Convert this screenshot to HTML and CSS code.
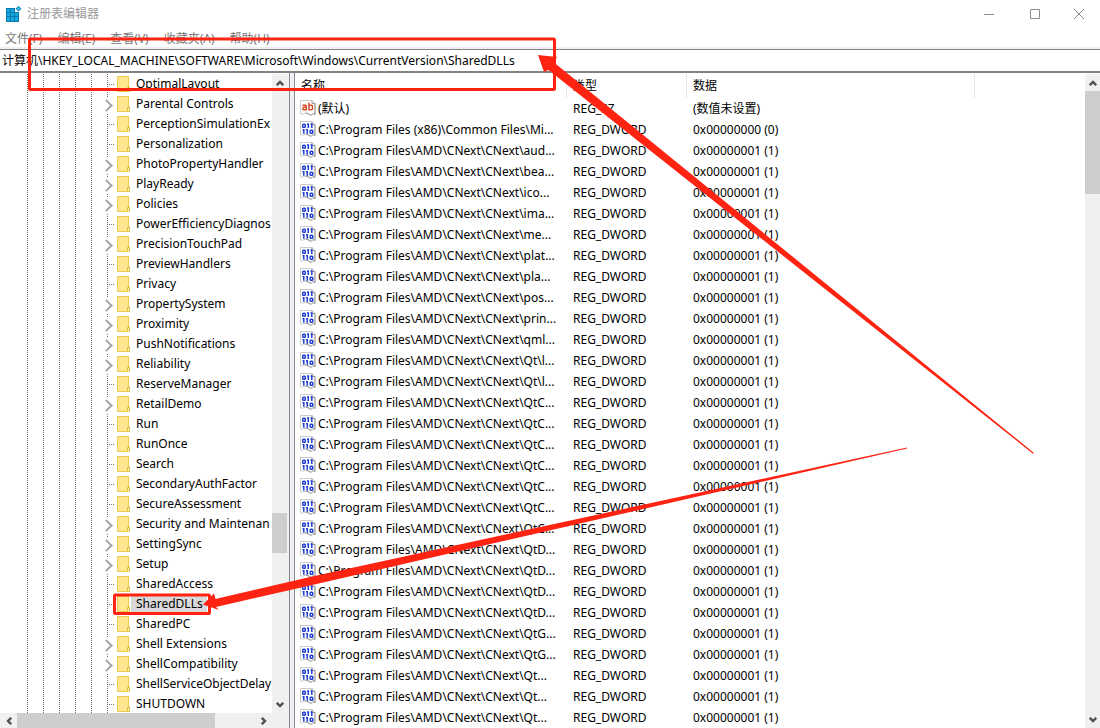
FILE: index.html
```
<!DOCTYPE html>
<html lang="zh-CN">
<head>
<meta charset="utf-8">
<title>注册表编辑器</title>
<link rel="stylesheet" href="styles.css">
</head>
<body>
<svg class="defs" aria-hidden="true">
  <symbol id="folder" viewBox="0 0 14 16">
    <path d="M.5.500h11v10.500h1v4.500H.5z" fill="#ffe68f" stroke="#ecc94f"/>
    <path d="M10.500 15V11.500h2V15" fill="#fff0b4" stroke="#e3b93a"/>
  </symbol>
  <symbol id="sheet" viewBox="0 0 16 16">
    <path d="M.5.500h11.500l3 3v11l-2-1-2 2-3-1.500-2.500-1-2 1H.5z" fill="#fff" stroke="#cbcbcb"/>
    <path d="M12 .5v3h3v11l-2-1-2 2-3-2-2.500-.5" fill="none" stroke="#999"/>
  </symbol>
  <symbol id="binary" viewBox="0 0 16 16">
    <use href="#sheet"/>
    <g fill="none" stroke="#1f3fd0" stroke-width="1.500">
      <rect x="2.700" y="3.200" width="2.600" height="3" rx=".8"/><path d="M7 3h1.300v4M10.500 3h1.300v4"/>
      <path d="M2.500 8.800h1.300v4M6 8.800h1.300v4"/><rect x="10.200" y="9.200" width="2.600" height="3" rx=".8"/>
    </g>
  </symbol>
  <symbol id="string" viewBox="0 0 16 16">
    <use href="#sheet"/>
    <g fill="none" stroke="#d64a28" stroke-width="1.500">
      <path d="M2.500 5.200h3q.8 0 .8.800v4.500M6 7.300H3.500q-1.500 1.300 0 2.500H6M9 2.500v7.300h2.200q1.300 0 1.300-1.300V6.500q0-1.300-1.300-1.300H9"/>
    </g>
  </symbol>
  <symbol id="chev" viewBox="0 0 8 8">
    <path d="M.8 6.200L4 3l3.200 3.200" fill="none" stroke="#505050" stroke-width="2.400"/>
  </symbol>
</svg>
<div class="window">
  <header class="titlebar">
    <svg class="logo" viewBox="0 0 16 16" aria-hidden="true">
      <path d="M0 2h9v4h4v10H0z" fill="#0878b4"/>
      <path d="M1 3h3v3H1zM5 3h3v3H5zM1 7h3v3H1zM5 7h3v3H5zM9 7h3v3H9zM1 11h3v4H1zM5 11h3v4H5zM9 11h3v4H9z" fill="#18a9dc"/>
      <path d="M12.500 0l3 2.800-3 2.800-3-2.800z" fill="#0784bd"/><path d="M12.500 1.500l1.500 1.300-1.500 1.300L11 2.800z" fill="#55d2f4"/>
    </svg>
    <h1 class="title">注册表编辑器</h1>
    <div class="controls">
      <button aria-label="最小化"><svg viewBox="0 0 12 12"><path d="M1 6.500h10"/></svg></button>
      <button aria-label="最大化"><svg viewBox="0 0 12 12"><path d="M1.500 1.500h9v9h-9z"/></svg></button>
      <button aria-label="关闭"><svg viewBox="0 0 12 12"><path d="M1 1l10 10M11 1L1 11"/></svg></button>
    </div>
  </header>
  <nav class="menu">
    <button>文件(F)</button><button>编辑(E)</button><button>查看(V)</button><button>收藏夹(A)</button><button>帮助(H)</button>
  </nav>
  <input class="address" aria-label="地址" value="计算机\HKEY_LOCAL_MACHINE\SOFTWARE\Microsoft\Windows\CurrentVersion\SharedDLLs">
  <main class="panes">
    <section class="left">
      <div class="treebox">
        <ul class="tree">
          <li><svg><use href="#folder"/></svg><span>OptimalLayout</span></li>
          <li class="sub"><svg><use href="#folder"/></svg><span>Parental Controls</span></li>
          <li><svg><use href="#folder"/></svg><span>PerceptionSimulationEx</span></li>
          <li><svg><use href="#folder"/></svg><span>Personalization</span></li>
          <li class="sub"><svg><use href="#folder"/></svg><span>PhotoPropertyHandler</span></li>
          <li class="sub"><svg><use href="#folder"/></svg><span>PlayReady</span></li>
          <li class="sub"><svg><use href="#folder"/></svg><span>Policies</span></li>
          <li><svg><use href="#folder"/></svg><span>PowerEfficiencyDiagnos</span></li>
          <li class="sub"><svg><use href="#folder"/></svg><span>PrecisionTouchPad</span></li>
          <li><svg><use href="#folder"/></svg><span>PreviewHandlers</span></li>
          <li><svg><use href="#folder"/></svg><span>Privacy</span></li>
          <li class="sub"><svg><use href="#folder"/></svg><span>PropertySystem</span></li>
          <li class="sub"><svg><use href="#folder"/></svg><span>Proximity</span></li>
          <li class="sub"><svg><use href="#folder"/></svg><span>PushNotifications</span></li>
          <li class="sub"><svg><use href="#folder"/></svg><span>Reliability</span></li>
          <li><svg><use href="#folder"/></svg><span>ReserveManager</span></li>
          <li class="sub"><svg><use href="#folder"/></svg><span>RetailDemo</span></li>
          <li><svg><use href="#folder"/></svg><span>Run</span></li>
          <li><svg><use href="#folder"/></svg><span>RunOnce</span></li>
          <li><svg><use href="#folder"/></svg><span>Search</span></li>
          <li><svg><use href="#folder"/></svg><span>SecondaryAuthFactor</span></li>
          <li><svg><use href="#folder"/></svg><span>SecureAssessment</span></li>
          <li class="sub"><svg><use href="#folder"/></svg><span>Security and Maintenan</span></li>
          <li class="sub"><svg><use href="#folder"/></svg><span>SettingSync</span></li>
          <li class="sub"><svg><use href="#folder"/></svg><span>Setup</span></li>
          <li><svg><use href="#folder"/></svg><span>SharedAccess</span></li>
          <li class="selected"><svg><use href="#folder"/></svg><span>SharedDLLs</span></li>
          <li><svg><use href="#folder"/></svg><span>SharedPC</span></li>
          <li class="sub"><svg><use href="#folder"/></svg><span>Shell Extensions</span></li>
          <li class="sub"><svg><use href="#folder"/></svg><span>ShellCompatibility</span></li>
          <li><svg><use href="#folder"/></svg><span>ShellServiceObjectDelay</span></li>
          <li><svg><use href="#folder"/></svg><span>SHUTDOWN</span></li>
        </ul>
        <div class="vscroll tree-v">
          <button aria-label="向上"><svg><use href="#chev"/></svg></button>
          <div class="track"><div class="thumb"></div></div>
          <button class="down" aria-label="向下"><svg><use href="#chev"/></svg></button>
        </div>
      </div>
      <div class="hscroll">
        <button class="west" aria-label="向左"><svg><use href="#chev"/></svg></button>
        <div class="track"><div class="thumb"></div></div>
        <button class="east" aria-label="向右"><svg><use href="#chev"/></svg></button>
      </div>
    </section>
    <div class="splitter"></div>
    <section class="right">
      <div class="listbox">
      <table class="values">
        <colgroup><col class="c-name"><col class="c-type"><col class="c-data"><col></colgroup>
        <thead><tr><th>名称</th><th>类型</th><th>数据</th><td></td></tr></thead>
        <tbody>
          <tr><td><svg><use href="#string"/></svg>(默认)</td><td>REG_SZ</td><td>(数值未设置)</td></tr>
          <tr><td><svg><use href="#binary"/></svg>C:\Program Files (x86)\Common Files\Mi...</td><td>REG_DWORD</td><td>0x00000000 (0)</td></tr>
          <tr><td><svg><use href="#binary"/></svg>C:\Program Files\AMD\CNext\CNext\aud...</td><td>REG_DWORD</td><td>0x00000001 (1)</td></tr>
          <tr><td><svg><use href="#binary"/></svg>C:\Program Files\AMD\CNext\CNext\bea...</td><td>REG_DWORD</td><td>0x00000001 (1)</td></tr>
          <tr><td><svg><use href="#binary"/></svg>C:\Program Files\AMD\CNext\CNext\ico...</td><td>REG_DWORD</td><td>0x00000001 (1)</td></tr>
          <tr><td><svg><use href="#binary"/></svg>C:\Program Files\AMD\CNext\CNext\ima...</td><td>REG_DWORD</td><td>0x00000001 (1)</td></tr>
          <tr><td><svg><use href="#binary"/></svg>C:\Program Files\AMD\CNext\CNext\me...</td><td>REG_DWORD</td><td>0x00000001 (1)</td></tr>
          <tr><td><svg><use href="#binary"/></svg>C:\Program Files\AMD\CNext\CNext\plat...</td><td>REG_DWORD</td><td>0x00000001 (1)</td></tr>
          <tr><td><svg><use href="#binary"/></svg>C:\Program Files\AMD\CNext\CNext\pla...</td><td>REG_DWORD</td><td>0x00000001 (1)</td></tr>
          <tr><td><svg><use href="#binary"/></svg>C:\Program Files\AMD\CNext\CNext\pos...</td><td>REG_DWORD</td><td>0x00000001 (1)</td></tr>
          <tr><td><svg><use href="#binary"/></svg>C:\Program Files\AMD\CNext\CNext\prin...</td><td>REG_DWORD</td><td>0x00000001 (1)</td></tr>
          <tr><td><svg><use href="#binary"/></svg>C:\Program Files\AMD\CNext\CNext\qml...</td><td>REG_DWORD</td><td>0x00000001 (1)</td></tr>
          <tr><td><svg><use href="#binary"/></svg>C:\Program Files\AMD\CNext\CNext\Qt\l...</td><td>REG_DWORD</td><td>0x00000001 (1)</td></tr>
          <tr><td><svg><use href="#binary"/></svg>C:\Program Files\AMD\CNext\CNext\Qt\l...</td><td>REG_DWORD</td><td>0x00000001 (1)</td></tr>
          <tr><td><svg><use href="#binary"/></svg>C:\Program Files\AMD\CNext\CNext\QtC...</td><td>REG_DWORD</td><td>0x00000001 (1)</td></tr>
          <tr><td><svg><use href="#binary"/></svg>C:\Program Files\AMD\CNext\CNext\QtC...</td><td>REG_DWORD</td><td>0x00000001 (1)</td></tr>
          <tr><td><svg><use href="#binary"/></svg>C:\Program Files\AMD\CNext\CNext\QtC...</td><td>REG_DWORD</td><td>0x00000001 (1)</td></tr>
          <tr><td><svg><use href="#binary"/></svg>C:\Program Files\AMD\CNext\CNext\QtC...</td><td>REG_DWORD</td><td>0x00000001 (1)</td></tr>
          <tr><td><svg><use href="#binary"/></svg>C:\Program Files\AMD\CNext\CNext\QtC...</td><td>REG_DWORD</td><td>0x00000001 (1)</td></tr>
          <tr><td><svg><use href="#binary"/></svg>C:\Program Files\AMD\CNext\CNext\QtC...</td><td>REG_DWORD</td><td>0x00000001 (1)</td></tr>
          <tr><td><svg><use href="#binary"/></svg>C:\Program Files\AMD\CNext\CNext\QtC...</td><td>REG_DWORD</td><td>0x00000001 (1)</td></tr>
          <tr><td><svg><use href="#binary"/></svg>C:\Program Files\AMD\CNext\CNext\QtD...</td><td>REG_DWORD</td><td>0x00000001 (1)</td></tr>
          <tr><td><svg><use href="#binary"/></svg>C:\Program Files\AMD\CNext\CNext\QtD...</td><td>REG_DWORD</td><td>0x00000001 (1)</td></tr>
          <tr><td><svg><use href="#binary"/></svg>C:\Program Files\AMD\CNext\CNext\QtD...</td><td>REG_DWORD</td><td>0x00000001 (1)</td></tr>
          <tr><td><svg><use href="#binary"/></svg>C:\Program Files\AMD\CNext\CNext\QtD...</td><td>REG_DWORD</td><td>0x00000001 (1)</td></tr>
          <tr><td><svg><use href="#binary"/></svg>C:\Program Files\AMD\CNext\CNext\QtG...</td><td>REG_DWORD</td><td>0x00000001 (1)</td></tr>
          <tr><td><svg><use href="#binary"/></svg>C:\Program Files\AMD\CNext\CNext\QtG...</td><td>REG_DWORD</td><td>0x00000001 (1)</td></tr>
          <tr><td><svg><use href="#binary"/></svg>C:\Program Files\AMD\CNext\CNext\Qt...</td><td>REG_DWORD</td><td>0x00000001 (1)</td></tr>
          <tr><td><svg><use href="#binary"/></svg>C:\Program Files\AMD\CNext\CNext\Qt...</td><td>REG_DWORD</td><td>0x00000001 (1)</td></tr>
          <tr><td><svg><use href="#binary"/></svg>C:\Program Files\AMD\CNext\CNext\Qt...</td><td>REG_DWORD</td><td>0x00000001 (1)</td></tr>
        </tbody>
      </table>
      </div>
      <div class="vscroll list-v">
        <button aria-label="向上"><svg><use href="#chev"/></svg></button>
        <div class="track"><div class="thumb"></div></div>
        <button class="down" aria-label="向下"><svg><use href="#chev"/></svg></button>
      </div>
    </section>
  </main>
  <svg class="marks" width="1100" height="728" viewBox="0 0 1100 728" aria-hidden="true">
    <g fill="none" stroke="#ff2312" stroke-width="3" stroke-linejoin="round">
      <rect x="29.500" y="39" width="525" height="50.500" rx="1"/>
      <rect x="114.500" y="595" width="95" height="18.500" rx="1"/>
    </g>
    <path fill="#ff2312" d="M538 55l19 2-3 5.500L1034 453l-1 .7L548.500 70l-4.500 2zM203 604.500l11-11 1.500 5.500L310 577l597-129.500v1L310 585.500l-94 21.500 3 3z"/>
  </svg>
</div>
</body>
</html>
```
FILE: styles.css
```
* { box-sizing: border-box; }
body {
  margin: 0;
  font: 12px/20px "Noto Sans", "Noto Sans CJK SC", sans-serif;
  color: #000;
  background: #fff;
}
button {
  border: 0;
  padding: 0;
  background: none;
  font: inherit;
  color: inherit;
}
.defs { position: absolute; width: 0; height: 0; }
.window {
  position: relative;
  display: flex;
  flex-direction: column;
  height: 100vh;
  overflow: hidden;
}
.titlebar { display: flex; align-items: center; height: 27px; padding-left: 6px; flex: none; }
.logo { width: 16px; height: 16px; }
.title { margin: 0 0 0 5px; font-size: 12px; font-weight: 400; color: #999; flex: 1; }
.controls { display: flex; }
.controls button { width: 46px; height: 26px; display: grid; place-items: center; }
.controls button:last-child { width: 42px; }
.controls svg { width: 12px; height: 12px; fill: none; stroke: #8c8c8c; }
.menu { display: flex; gap: 15px; height: 22px; padding: 2px 0 0 5px; border-bottom: 2px solid #f0f0f0; color: #777; flex: none; }
.address {
  height: 24px;
  flex: none;
  width: 100%;
  padding: 0 2px 2px;
  border: solid #828282;
  border-width: 1px 0 2px;
  border-radius: 0;
  font: inherit;
  outline: 0;
}
.panes { display: flex; flex: 1; min-height: 0; }
.left { width: 290px; flex: none; display: flex; flex-direction: column; border-right: 1px solid #828790; padding-top: 1px; }
.treebox { flex: 1; display: flex; min-height: 0; }
.tree {
  flex: 1;
  min-width: 0;
  margin: 0;
  padding: 0 0 0 27px;
  list-style: none;
  overflow: hidden;
  background: repeating-linear-gradient(to bottom, transparent 0 1px, #fff 1px 2px) 27px 0 / 66px 100% no-repeat,
    repeating-linear-gradient(to right, #707070 0 1px, transparent 1px 16px) 27px 0 / 66px 100% no-repeat;
}
.tree li {
  height: 20px;
  margin-left: 79px;
  padding-left: 11px;
  display: flex;
  align-items: center;
  white-space: nowrap;
  background: repeating-linear-gradient(to bottom, #707070 0 1px, transparent 1px 2px) 1px 0 / 1px 100% no-repeat,
    repeating-linear-gradient(to right, #707070 0 1px, transparent 1px 2px) 3px 10px / 6px 1px no-repeat;
}
.tree li svg { width: 14px; height: 16px; flex: none; }
.tree li span { padding: 0 4px 0 5px; }
.tree .sub { position: relative; background: repeating-linear-gradient(to bottom, #707070 0 1px, transparent 1px 2px) 1px 0 / 1px 3px no-repeat; }
.tree .sub::before {
  content: "";
  position: absolute;
  left: -4px;
  top: 7px;
  width: 7px;
  height: 7px;
  border: solid #a6a6a6;
  border-width: 2px 2px 0 0;
  transform: rotate(45deg);
}
.tree .selected span { background: #d9d9d9; }
.vscroll { width: 17px; flex: none; display: flex; flex-direction: column; background: #f0f0f0; }
.vscroll button { height: 17px; display: grid; place-items: center; }
.vscroll svg, .hscroll svg { width: 8px; height: 8px; }
.down svg { transform: rotate(180deg); }
.west svg { transform: rotate(-90deg); }
.east svg { transform: rotate(90deg); }
.track { flex: 1; display: flex; flex-direction: column; }
.thumb { background: #cdcdcd; }
.tree-v { border-right: 2px solid #f0f0f0; }
.tree-v .thumb { height: 40px; margin-top: 422px; }
.list-v { width: 15px; }
.list-v .thumb { height: 103px; }
.hscroll { height: 15px; flex: none; display: flex; background: #f0f0f0; padding-right: 17px; }
.hscroll button { width: 17px; display: grid; place-items: center; }
.hscroll .thumb { width: 198px; flex: 1; }
.splitter { width: 5px; flex: none; background: #f0f0f0; border-right: 1px solid #828790; }
.right { flex: 1; min-width: 0; display: flex; padding-top: 1px; }
.listbox { flex: 1; min-width: 0; overflow: hidden; }
.values { width: 100%; table-layout: fixed; border-collapse: separate; border-spacing: 0; }
.c-name { width: 272px; }
.c-type { width: 120px; }
.c-data { width: 288px; }
.values th { height: 24px; padding: 0 6px; border-right: 1px solid #e5e5e5; font-weight: 400; text-align: left; }
.values td { height: 21px; padding: 0 6px; line-height: 20px; white-space: nowrap; }
.values td:first-child { padding: 0 0 0 5px; }
.values td svg { width: 16px; height: 16px; margin-right: 2px; vertical-align: -3px; }
.marks { position: absolute; left: 0; top: 0; pointer-events: none; }
```
